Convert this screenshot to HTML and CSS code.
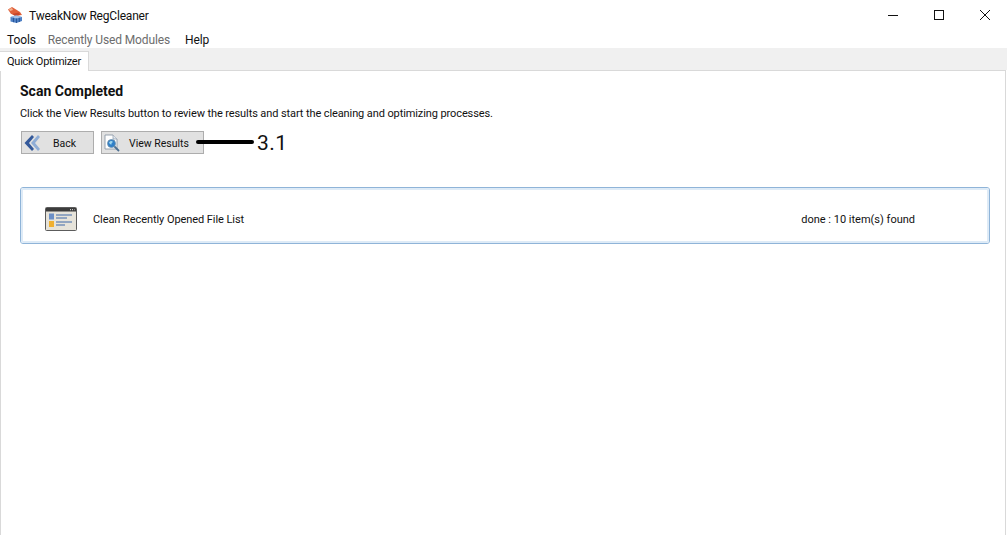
FILE: index.html
```html
<!DOCTYPE html>
<html lang="en">
<head>
<meta charset="utf-8">
<title>TweakNow RegCleaner</title>
<link rel="stylesheet" href="styles.css">
</head>
<body>
<header class="titlebar">
  <svg class="appicon" viewBox="0 0 18 18" width="18" height="18">
    <path d="M1 3.5 L5 1 L13 6 L15 9 L11 9.5 L4 8 Z" fill="#e0603a"/>
    <path d="M2 3 L5 2 L6 4 L3 5 Z" fill="#f3b08e"/>
    <path d="M5 8 L12 6.5 L13 9 L8 10 Z" fill="#c9472b"/>
    <path d="M3.5 11 L9 9.5 L15 11 L15 15 L9.5 17 L3.5 15.5 Z" fill="#4d7fc4"/>
    <path d="M3.5 11 L9.5 12.5 L15 11 L9 9.5 Z" fill="#a5c4ea"/>
    <path d="M9.5 12.5 V17 M6.5 11.8 V16.2 M12.3 11.8 V16" stroke="#1f4b8e" stroke-width=".8" fill="none"/>
  </svg>
  <span class="apptitle">TweakNow RegCleaner</span>
  <div class="winctrls">
    <svg viewBox="0 0 12 12" width="12" height="12"><path d="M1 6.5 H11" stroke="#111" fill="none"/></svg>
    <svg viewBox="0 0 12 12" width="12" height="12"><rect x="1.5" y="1.5" width="9" height="9" stroke="#111" fill="none"/></svg>
    <svg viewBox="0 0 12 12" width="12" height="12"><path d="M1 1 L11 11 M11 1 L1 11" stroke="#111" fill="none"/></svg>
  </div>
</header>
<nav class="menubar">
  <span>Tools</span>
  <span class="disabled">Recently Used Modules</span>
  <span>Help</span>
</nav>
<div class="tabstrip"><div class="tab">Quick Optimizer</div></div>
<main class="panel">
  <h1>Scan Completed</h1>
  <p>Click the View Results button to review the results and start the cleaning and optimizing processes.</p>
  <div class="actions">
    <button class="btn btn-back" type="button">
      <svg viewBox="0 0 18 18" width="18" height="18">
        <path d="M9 1 L1.5 9 L9 17 L11 15 L6 9 L11 3 Z" fill="#34599a"/>
        <path d="M15 1 L8 9 L15 17 L17 15 L12 9 L17 3 Z" fill="#8fadd6"/>
      </svg>
      <span>Back</span>
    </button>
    <div class="viewwrap">
      <button class="btn btn-view" type="button">
        <svg viewBox="0 0 18 18" width="18" height="18">
          <path d="M2 1 H10 L14 5 V15 H2 Z" fill="#fff" stroke="#8d98a6" stroke-width=".9"/>
          <path d="M10 1 V5 H14" fill="#dfe6ee" stroke="#8d98a6" stroke-width=".7"/>
          <circle cx="8.5" cy="9.5" r="4" fill="#2f7fc8" stroke="#6f8fa8" stroke-width=".8"/>
          <path d="M6 8.5 Q8 6 10 8 Q8 8.5 8.5 10.5 Q7 11 6 8.5Z" fill="#9fd8ef"/>
          <path d="M11.5 12.5 L16 17" stroke="#4d6f90" stroke-width="1.8" fill="none"/>
        </svg>
        <span>View Results</span>
      </button>
      <div class="annot-line"></div>
      <div class="annot-label">3.1</div>
    </div>
  </div>
  <section class="result">
    <svg class="resicon" viewBox="0 0 32 24" width="32" height="24">
      <rect x=".5" y=".5" width="31" height="23" rx="1" fill="#e6e3da" stroke="#5c5c5c"/>
      <rect x="1" y="1" width="30" height="3.5" fill="#3c3c3c"/>
      <path d="M25 2.7 H29.5" stroke="#eee" stroke-dasharray="1 1" fill="none"/>
      <rect x="4" y="6.5" width="5" height="6" fill="#6c90c8"/>
      <rect x="4" y="14" width="5" height="6" fill="#f0b030"/>
      <path d="M11 8 H27 M11 11 H22 M11 15 H27 M11 18 H20" stroke="#3f68a8" fill="none"/>
    </svg>
    <span class="resname">Clean Recently Opened File List</span>
    <span class="resstatus">done : 10 item(s) found</span>
  </section>
</main>
</body>
</html>
```
FILE: styles.css
```css
html, body {
  margin: 0;
  padding: 0;
  background: #fff;
  overflow: hidden;
}
body {
  width: 1007px;
  height: 535px;
  display: flex;
  flex-direction: column;
  font-family: Roboto, "Liberation Sans", sans-serif;
  color: #111;
}
.titlebar {
  height: 30px;
  display: flex;
  align-items: center;
  padding-left: 7px;
  flex: none;
}
.appicon { margin-right: 4px; }
.apptitle {
  font-size: 12px;
  letter-spacing: -.2px;
  padding-top: 2px;
}
.winctrls {
  margin-left: auto;
  display: flex;
  gap: 34px;
  padding-right: 16px;
}
.menubar {
  height: 18px;
  display: flex;
  align-items: center;
  gap: 14px;
  padding: 2px 0 0 7px;
  box-sizing: border-box;
  font-size: 12px;
  letter-spacing: -.12px;
  flex: none;
}
.disabled {
  color: #6d6d6d;
  margin: 0 1px 0 -2px;
}
.tabstrip {
  height: 22px;
  background: #f0f0f0;
  display: flex;
  align-items: flex-end;
  flex: none;
}
.tab {
  width: 89px;
  height: 20px;
  box-sizing: border-box;
  background: #fff;
  border: 1px solid #d9d9d9;
  border-width: 1px 1px 0 0;
  padding-left: 7px;
  font-size: 11px;
  letter-spacing: -.25px;
  line-height: 19px;
  margin-bottom: -1px;
  white-space: nowrap;
  position: relative;
}
.panel {
  flex: 1;
  margin-right: 1px;
  border: 1px solid #d9d9d9;
  border-bottom: 0;
  padding: 0 15px 0 19px;
}
h1 {
  margin: 11px 0 0;
  font-size: 14px;
  font-weight: 700;
  line-height: 18px;
  color: #111;
}
p {
  margin: 6px 0 0;
  font-size: 11px;
  letter-spacing: -.1px;
  line-height: 15px;
}
.actions {
  display: flex;
  gap: 7px;
  margin: 10px 0 0 1px;
}
.viewwrap { position: relative; }
.btn {
  height: 23px;
  box-sizing: border-box;
  display: flex;
  align-items: center;
  background: #e1e1e1;
  border: 1px solid #adadad;
  padding: 0 0 0 1px;
  font: 10.5px Roboto, "Liberation Sans", sans-serif;
  color: #111;
}
.btn span { padding-top: 2px; }
.btn-back { width: 73px; }
.btn-back span { margin-left: 12px; }
.btn-view { width: 103px; }
.btn-view span { margin-left: 8px; }
.annot-line {
  position: absolute;
  left: 95px;
  top: 9px;
  width: 58px;
  height: 4px;
  border-radius: 2px;
  background: #000;
}
.annot-label {
  position: absolute;
  left: 156px;
  top: 0;
  font-size: 21px;
  line-height: 24px;
  color: #111;
  letter-spacing: .4px;
}
.result {
  margin-top: 33px;
  height: 57px;
  box-sizing: border-box;
  display: flex;
  align-items: center;
  border: 1px solid #8fb4d8;
  outline: 2px solid #deebf7;
  outline-offset: -3px;
  border-radius: 3px;
  background: #fff;
  font-size: 11px;
  padding: 6px 0 0 24px;
}
.result span { padding-top: 2px; }
.resname {
  margin-left: 16px;
  letter-spacing: -.07px;
}
.resstatus { margin-left: auto; margin-right: 74px; }
```
